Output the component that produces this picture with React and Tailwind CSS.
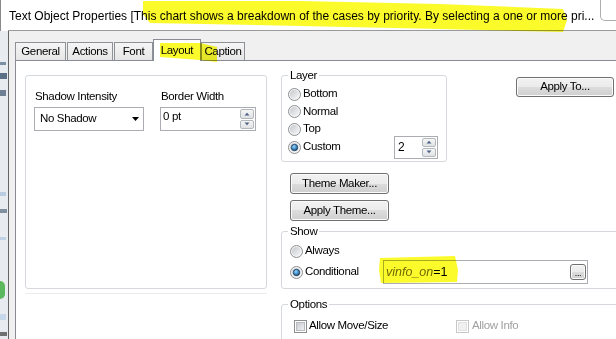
import React from "react";

function Radio({ checked }) {
  return (
    <svg width="13" height="13" viewBox="0 0 13 13" className="shrink-0">
      <defs>
        <linearGradient id="rfill" x1="0" y1="0" x2="1" y2="1">
          <stop offset="0" stopColor="#c4c7cc" />
          <stop offset="1" stopColor="#f7f8f9" />
        </linearGradient>
        <radialGradient id="rdot" cx="0.4" cy="0.35" r="0.7">
          <stop offset="0" stopColor="#9ad6ff" />
          <stop offset="0.6" stopColor="#3a86c0" />
          <stop offset="1" stopColor="#17405f" />
        </radialGradient>
      </defs>
      <circle cx="6.5" cy="6.5" r="6" fill="#f4f4f4" stroke="#8c8e92" />
      <circle cx="6.5" cy="6.5" r="4.5" fill="url(#rfill)" />
      {checked && <circle cx="6.5" cy="6.5" r="3.2" fill="url(#rdot)" stroke="#1c3c58" strokeWidth="0.8" />}
    </svg>
  );
}

function Check({ disabled }) {
  return (
    <svg width="13" height="13" viewBox="0 0 13 13" className="shrink-0">
      <defs>
        <linearGradient id="cfill" x1="0" y1="0" x2="1" y2="1">
          <stop offset="0" stopColor="#c6c9ce" />
          <stop offset="1" stopColor="#f3f4f5" />
        </linearGradient>
      </defs>
      <rect x="0.5" y="0.5" width="12" height="12" fill="#fff" stroke={disabled ? "#c8c8c8" : "#8e8f8f"} />
      <rect x="2.5" y="2.5" width="8" height="8" fill={disabled ? "#f0f0f0" : "url(#cfill)"} stroke={disabled ? "#e2e2e2" : "#b8bbbf"} />
    </svg>
  );
}

function Arrow({ up }) {
  return (
    <svg width="6" height="4" viewBox="0 0 6 4">
      <polygon points={up ? "0.5,3.5 3,0.8 5.5,3.5" : "0.5,0.5 3,3.2 5.5,0.5"} fill="#4d6185" />
    </svg>
  );
}

function Spin() {
  return (
    <div className="flex w-[15px] shrink-0 flex-col gap-px py-px pr-px">
      <div className="flex flex-1 items-center justify-center rounded-[2px] border border-[#b3b8bd] bg-[linear-gradient(#f6f6f6,#dfe1e3)]">
        <Arrow up />
      </div>
      <div className="flex flex-1 items-center justify-center rounded-[2px] border border-[#b3b8bd] bg-[linear-gradient(#f6f6f6,#dfe1e3)]">
        <Arrow />
      </div>
    </div>
  );
}

function Btn({ children, className }) {
  return (
    <div
      className={
        "flex shrink-0 items-center justify-center rounded-[3px] border border-[#707070] bg-[linear-gradient(#f2f2f2,#ebebeb_50%,#dddddd_50%,#cfcfcf)] shadow-[inset_0_0_0_1px_#fbfbfb] " +
        className
      }
    >
      {children}
    </div>
  );
}

function Tab({ label, active, className }) {
  if (active) {
    return (
      <div className={"relative z-10 mb-[-1px] flex h-[22px] shrink-0 justify-center border-x border-t border-[#898c95] bg-white pt-[2px] " + className}>
        {label}
      </div>
    );
  }
  return (
    <div className={"flex h-[18px] shrink-0 items-center justify-center border-x border-t border-[#8e9297] bg-[linear-gradient(#f5f5f5,#e6e6e6)] " + className}>
      {label}
    </div>
  );
}

function Group({ label, className, children, legendClass = "" }) {
  return (
    <fieldset className={"rounded-[3px] border border-[#d5d9dd] " + className}>
      <legend className={"px-[2px] leading-[15px] " + legendClass}>{label}</legend>
      {children}
    </fieldset>
  );
}

function LeftStrip() {
  return (
    <div className="flex w-[8px] shrink-0 flex-col">
      <div className="h-[31px] shrink-0 border-l border-[#8a8a8a] bg-white" />
      <div className="flex flex-1 flex-col bg-[#e8ecf0]">
        <div className="mt-[31px] h-[3px] w-[6px] bg-[#7d8fa3]" />
        <div className="mt-[8px] h-[6px] w-[7px] bg-[#5d6f86]" />
        <div className="mt-[11px] h-[6px] w-[6px] bg-[#6e7f94]" />
        <div className="mt-[96px] h-[4px] w-[6px] bg-[#b9cce0]" />
        <div className="mt-[13px] h-[4px] w-[7px] bg-[#8090a0]" />
        <div className="mt-[24px] h-[3px] w-[6px] bg-[#c0d3e6]" />
        <div className="mt-[41px] h-[18px] w-[5px] rounded-r-full bg-[#5cb85c]" />
        <div className="mt-[15px] h-[6px] w-[6px] bg-[#c6d8ea]" />
        <div className="mt-[12px] h-[4px] w-[7px] bg-[#707070]" />
      </div>
    </div>
  );
}

export default function App() {
  return (
    <div className="relative flex h-[339px] w-[616px] overflow-hidden bg-white font-['Liberation_Sans',Arial,sans-serif] text-[11.5px] tracking-[-0.35px] text-black">
      <LeftStrip />
      <div className="flex w-[608px] shrink-0 flex-col">
        <div className="flex h-[31px] shrink-0 items-start border-b border-[#9a9a9a] bg-white">
          <div className="overflow-hidden whitespace-nowrap pl-[1px] pt-[8px] text-[12px] leading-[16px] tracking-normal">
            Text Object Properties [This chart shows a breakdown of the cases by priority. By selecting a one or more pri...
          </div>
          <div className="ml-auto h-[21px] w-[16px] shrink-0 rounded-bl-[5px] border-b border-l border-[#adadad]" />
        </div>

        <div className="flex flex-1 border-l border-[#646464] bg-[#f0f0f0]">
          <div className="ml-[6px] flex flex-1 flex-col">
            <div className="flex h-[29px] shrink-0 items-end">
              <Tab label="General" className="w-[51px]" />
              <Tab label="Actions" className="ml-[1px] w-[46px]" />
              <Tab label="Font" className="ml-[1px] w-[39px]" />
              <Tab label="Layout" active className="w-[48px]" />
              <Tab label="Caption" className="w-[44px]" />
            </div>

            <div className="flex w-[700px] flex-1 items-start border-l border-t border-[#898c95] bg-white pl-[9px] pt-[7px]">
              {/* shadow / border */}
              <div className="mt-[7px] w-[242px] shrink-0">
                <div className="flex h-[214px] items-start rounded-[3px] border border-[#d5d9dd] pl-[8px] pt-[13px]">
                  <div className="w-[110px]">
                    <div className="pl-px leading-[15px]">Shadow Intensity</div>
                    <div className="mt-[3px] flex h-[24px] items-center border border-[#abadb3] bg-white pl-[5px] pr-[4px]">
                      <span>No Shadow</span>
                      <svg width="7" height="4" viewBox="0 0 7 4" className="ml-auto">
                        <polygon points="0,0 7,0 3.5,4" fill="#000" />
                      </svg>
                    </div>
                  </div>
                  <div className="ml-[16px] w-[96px]">
                    <div className="pl-px leading-[15px]">Border Width</div>
                    <div className="mt-[3px] flex h-[24px] border border-[#abadb3] bg-white">
                      <div className="flex-1 pl-[2px] pt-px leading-[15px]">0 pt</div>
                      <Spin />
                    </div>
                  </div>
                </div>
                <div className="mt-[4px] h-px bg-[#ececec]" />
              </div>

              {/* right side */}
              <div className="ml-[14px] flex flex-col items-start">
                <div className="flex items-start">
                  <Group label="Layer" className="w-[166px] pb-[5px] pl-[6px] pr-[8px]">
                    <div className="flex flex-col pt-[2px]">
                      <div className="flex h-[18px] items-center gap-[2px]">
                        <Radio />
                        <span>Bottom</span>
                      </div>
                      <div className="flex h-[17px] items-center gap-[2px]">
                        <Radio />
                        <span>Normal</span>
                      </div>
                      <div className="flex h-[18px] items-center gap-[2px]">
                        <Radio />
                        <span>Top</span>
                      </div>
                      <div className="flex h-[18px] items-center gap-[2px]">
                        <Radio checked />
                        <span>Custom</span>
                        <div className="ml-auto flex h-[23px] w-[44px] shrink-0 border border-[#abadb3] bg-white">
                          <div className="flex-1 pl-[3px] text-[12px] leading-[20px]">2</div>
                          <Spin />
                        </div>
                      </div>
                    </div>
                  </Group>
                  <Btn className="ml-[69px] mt-[9px] h-[20px] w-[98px]">Apply To...</Btn>
                </div>

                <Btn className="ml-[9px] mt-[11px] h-[21px] w-[99px]">Theme Maker...</Btn>
                <Btn className="ml-[9px] mt-[6px] h-[21px] w-[99px]">Apply Theme...</Btn>

                <Group label="Show" className="mt-[3px] w-[400px] pb-[4px] pl-[8px]" legendClass="ml-[-2px]">
                  <div className="flex flex-col pt-[3px]">
                    <div className="flex h-[18px] items-center gap-[2px]">
                      <Radio />
                      <span>Always</span>
                    </div>
                    <div className="flex h-[24px] items-center">
                      <div className="flex w-[93px] items-center gap-[2px]">
                        <Radio checked />
                        <span>Conditional</span>
                      </div>
                      <div className="flex h-[24px] w-[205px] items-center border border-[#abadb3] bg-white pl-[2px] pr-px">
                        <span className="text-[12.5px] tracking-normal">
                          <span className="italic text-[#756a00]">vinfo_on</span>=1
                        </span>
                        <Btn className="ml-auto h-[16px] w-[16px] items-end pb-[2px] text-[9px] leading-[8px]">...</Btn>
                      </div>
                    </div>
                  </div>
                </Group>

                <Group label="Options" className="mt-[8px] w-[400px] pb-[6px] pl-[8px]" legendClass="ml-[-2px]">
                  <div className="box-content flex h-[18px] items-center pt-[5px]">
                    <div className="flex w-[166px] items-center gap-[2px] pl-[4px]">
                      <Check />
                      <span>Allow Move/Size</span>
                    </div>
                    <div className="flex items-center gap-[3px]">
                      <Check disabled />
                      <span className="text-[#a0a0a0]">Allow Info</span>
                    </div>
                  </div>
                </Group>
              </div>
            </div>
          </div>
        </div>
      </div>

      {/* highlighter marks drawn over the screenshot */}
      <svg className="pointer-events-none absolute left-0 top-0 z-20 mix-blend-multiply" width="616" height="339" viewBox="0 0 616 339">
        <polygon points="143,1 300,1 440,4 563,9 567,20 563,32 440,29 300,26 150,23 143,14" fill="#fbfb2c" />
        <polygon points="160,43 200,43 217,47 217,62 200,60 160,57" fill="#fbfb2c" />
        <polygon points="380,258 455,256 458,270 457,282 381,283 379,270" fill="#fbfb2c" />
      </svg>
    </div>
  );
}
